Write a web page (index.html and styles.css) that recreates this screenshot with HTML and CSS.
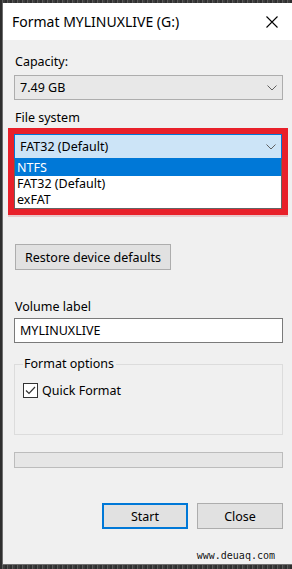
FILE: index.html
```html
<!DOCTYPE html>
<html lang="en">
<head>
    <meta charset="UTF-8">
    <meta name="viewport" content="width=device-width, initial-scale=1.0">
    <title>Format MYLINUXLIVE (G:)</title>
    <link rel="stylesheet" href="styles.css">
</head>
<body>
    <div class="window">
        <div class="titlebar">
            <span class="title">Format MYLINUXLIVE (G:)</span>
            <svg class="close" width="12" height="12" viewBox="0 0 12 12">
                <path d="M0.5 0.5 L11.5 11.5 M11.5 0.5 L0.5 11.5" stroke="#000" stroke-width="1.1" fill="none"/>
            </svg>
        </div>

        <div class="content">
            <div class="label">Capacity:</div>
            <div class="combo">
                <span>7.49 GB</span>
                <svg class="chevron" width="10" height="6" viewBox="0 0 10 6"><path d="M0.5 0.5 L5 5 L9.5 0.5" stroke="#606060" fill="none"/></svg>
            </div>

            <div class="label gap-file">File system</div>
            <div class="highlight">
                <div class="combo focused">
                    <span>FAT32 (Default)</span>
                    <svg class="chevron" width="10" height="6" viewBox="0 0 10 6"><path d="M0.5 0.5 L5 5 L9.5 0.5" stroke="#606060" fill="none"/></svg>
                </div>
                <ul class="droplist">
                    <li class="selected">NTFS</li>
                    <li>FAT32 (Default)</li>
                    <li>exFAT</li>
                </ul>
            </div>

            <button class="btn restore">Restore device defaults</button>

            <div class="label gap-volume">Volume label</div>
            <div class="textbox">MYLINUXLIVE</div>

            <div class="options">
                <div class="legend">Format options</div>
                <label class="check">
                    <span class="box">
                        <svg width="13" height="13" viewBox="0 0 13 13"><path d="M2 6.5 L5 9.5 L11 3" stroke="#333" stroke-width="1.2" fill="none"/></svg>
                    </span>
                    Quick Format
                </label>
            </div>

            <div class="progress"></div>

            <div class="actions">
                <button class="btn default">Start</button>
                <button class="btn">Close</button>
            </div>

            <div class="watermark">www.deuaq.com</div>
        </div>
    </div>
</body>
</html>
```

FILE: styles.css
```css
html, body {
    margin: 0;
    height: 100%;
}
body {
    background: repeating-linear-gradient(90deg, #2e2e2e 0 2px, #5a5a5a 2px 3px, #3c3c3c 3px 5px);
    font-family: 'Noto Sans', 'Open Sans', sans-serif;
    font-size: 12.5px;
    color: #000;
    padding: 3px 0 0 2px;
    box-sizing: border-box;
    overflow: hidden;
}
.window {
    background: #f0f0f0;
    border-left: 1px solid #6e6e6e;
    border-bottom: 1px solid #6e6e6e;
    height: 561px;
    display: flex;
    flex-direction: column;
}
.titlebar {
    background: #fff;
    height: 37px;
    display: flex;
    align-items: center;
    justify-content: space-between;
    padding: 0 14px 0 9px;
}
.title {
    font-size: 14px;
    color: #000;
}
.close {
    margin-top: 1px;
}
.content {
    flex: 1;
    display: flex;
    flex-direction: column;
    padding: 14px 9px 0 11px;
}
.label {
    line-height: 16px;
    height: 16px;
    padding-left: 1px;
}
.gap-file {
    margin-top: 10px;
}
.gap-volume {
    margin-top: 29px;
}
.combo {
    margin-top: 5px;
    height: 23px;
    border: 1px solid #adadad;
    background: #e8e8e8;
    display: flex;
    align-items: center;
    justify-content: space-between;
    padding: 0 5px 0 5px;
}
.highlight {
    margin: 2px 0 0 -6px;
    width: 268px;
    border: 6px solid #e8202a;
    box-shadow: 0 2px 0 #e6c8cb;
}
.highlight .combo {
    margin-top: 0;
}
.combo.focused {
    background: #cce4f7;
    border-color: #0078d7;
}
.droplist {
    list-style: none;
    margin: 0;
    padding: 0;
    background: #fff;
    border: 1px solid #646464;
    border-top: none;
    height: 49px;
    overflow: hidden;
}
.droplist li {
    line-height: 16px;
    height: 16px;
    padding-left: 2px;
}
.droplist li.selected {
    background: #0078d7;
    color: #fff;
    height: 17px;
    line-height: 17px;
}
.btn {
    font-family: inherit;
    font-size: 12.5px;
    color: #000;
    background: #e1e1e1;
    border: 1px solid #adadad;
    height: 26px;
    padding: 0;
    margin: 0;
}
.restore {
    margin-top: 29px;
    margin-left: 1px;
    width: 156px;
}
.textbox {
    margin-top: 3px;
    height: 23px;
    line-height: 23px;
    background: #fff;
    border: 1px solid #7a7a7a;
    padding-left: 5px;
}
.options {
    margin-top: 21px;
    height: 71px;
    box-sizing: border-box;
    border: 1px solid #dcdcdc;
    padding: 0 8px;
}
.legend {
    margin-top: -9px;
    width: fit-content;
    padding: 0 2px 0 1px;
    background: #f0f0f0;
    line-height: 16px;
    height: 16px;
}
.check {
    margin-top: 10px;
    display: flex;
    align-items: center;
    gap: 4px;
}
.box {
    width: 13px;
    height: 13px;
    border: 1px solid #333;
    background: #fff;
    display: flex;
}
.progress {
    margin-top: 17px;
    height: 14px;
    background: #e6e6e6;
    border: 1px solid #bcbcbc;
}
.actions {
    margin-top: 35px;
    display: flex;
    justify-content: flex-end;
    gap: 9px;
}
.actions .btn {
    width: 86px;
}
.btn.default {
    border: 2px solid #0078d7;
}
.watermark {
    margin-top: auto;
    align-self: flex-end;
    margin-right: 8px;
    margin-bottom: 2px;
    font-family: 'DejaVu Sans Mono', monospace;
    font-size: 10px;
    line-height: 12px;
    color: #111;
    text-shadow: 0 0 2px #fff;
}
```
